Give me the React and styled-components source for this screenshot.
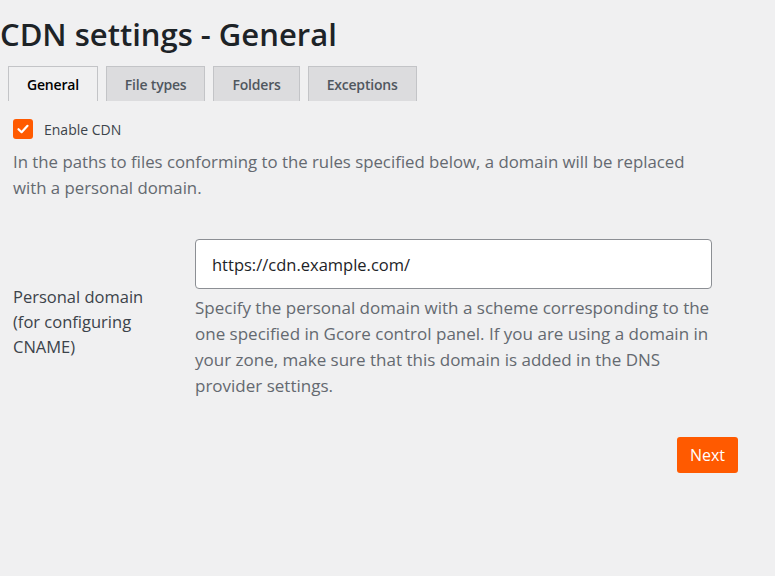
import React, { useState } from "react";
import styled, { createGlobalStyle } from "styled-components";

const GlobalStyle = createGlobalStyle`
  html, body {
    margin: 0;
    padding: 0;
    background: #f0f0f1;
  }
  body {
    font-family: "Open Sans", "Noto Sans", sans-serif;
    color: #3c434a;
  }
`;

const Page = styled.div`
  width: 775px;
  min-height: 576px;
  box-sizing: border-box;
  padding-top: 14px;
`;

const Title = styled.h1`
  margin: 0 0 12px 0;
  font-size: 31px;
  font-weight: 600;
  line-height: 40px;
  color: #1d2327;
`;

const Tabs = styled.nav`
  display: flex;
  gap: 8px;
  margin-left: 8px;
`;

const Tab = styled.button`
  height: 35px;
  padding: 0 18px;
  border: 1px solid #c3c4c7;
  border-bottom: none;
  background: ${(p) => (p.$active ? "#f0f0f1" : "#dcdcde")};
  color: ${(p) => (p.$active ? "#000" : "#50575e")};
  font-family: inherit;
  font-size: 14px;
  font-weight: 600;
  letter-spacing: -0.2px;
  cursor: pointer;
`;

const Body = styled.div`
  padding-left: 13px;
`;

const CheckRow = styled.label`
  display: flex;
  align-items: center;
  gap: 11px;
  margin-top: 18px;
  font-size: 14px;
  color: #3c434a;
  cursor: pointer;
`;

const Box = styled.span`
  width: 20px;
  height: 20px;
  border-radius: 3px;
  background: #ff5a00;
  display: flex;
  align-items: center;
  justify-content: center;
`;

const Intro = styled.p`
  margin: 10px 0 0 0;
  width: 700px;
  font-size: 16.8px;
  line-height: 26px;
  color: #646970;
`;

const FieldRow = styled.div`
  display: grid;
  grid-template-columns: 182px 517px;
  align-items: center;
  margin-top: 38px;
`;

const Label = styled.div`
  font-size: 16.5px;
  line-height: 25px;
  color: #3c434a;
  padding-top: 4px;
`;

const Field = styled.div`
  display: flex;
  flex-direction: column;
`;

const Input = styled.input`
  height: 50px;
  box-sizing: border-box;
  padding: 0 16px;
  border: 1px solid #8c8f94;
  border-radius: 4px;
  background: #fff;
  font-family: inherit;
  font-size: 16.5px;
  color: #1d2327;
  outline: none;
`;

const Hint = styled.p`
  margin: 6px 0 0 0;
  font-size: 17px;
  line-height: 26px;
  color: #646970;
`;

const Footer = styled.div`
  width: 725px;
  display: flex;
  justify-content: flex-end;
  margin-top: 38px;
`;

const NextButton = styled.button`
  height: 36px;
  padding: 0 13px;
  border: none;
  border-radius: 3px;
  background: #ff5a00;
  color: #fff;
  font-family: inherit;
  font-size: 16px;
  cursor: pointer;
`;

const tabs = ["General", "File types", "Folders", "Exceptions"];

export default function App() {
  const [active, setActive] = useState("General");
  const [domain, setDomain] = useState("https://cdn.example.com/");

  return (
    <Page>
      <GlobalStyle />
      <Title>CDN settings - General</Title>
      <Tabs>
        {tabs.map((t) => (
          <Tab key={t} $active={t === active} onClick={() => setActive(t)}>
            {t}
          </Tab>
        ))}
      </Tabs>
      <Body>
        <CheckRow>
          <Box>
            <svg width="14" height="14" viewBox="0 0 14 14">
              <path d="M2.5 7.2 L5.6 10.2 L11.5 3.8" fill="none" stroke="#fff" strokeWidth="2.2" strokeLinecap="round" strokeLinejoin="round" />
            </svg>
          </Box>
          Enable CDN
        </CheckRow>
        <Intro>
          In the paths to files conforming to the rules specified below, a domain will be replaced with a personal domain.
        </Intro>
        <FieldRow>
          <Label>
            Personal domain
            <br />
            (for configuring
            <br />
            CNAME)
          </Label>
          <Field>
            <Input value={domain} onChange={(e) => setDomain(e.target.value)} />
            <Hint>
              Specify the personal domain with a scheme corresponding to the one specified in Gcore control panel. If you are using a domain in your zone, make sure that this domain is added in the DNS provider settings.
            </Hint>
          </Field>
        </FieldRow>
        <Footer>
          <NextButton>Next</NextButton>
        </Footer>
      </Body>
    </Page>
  );
}
